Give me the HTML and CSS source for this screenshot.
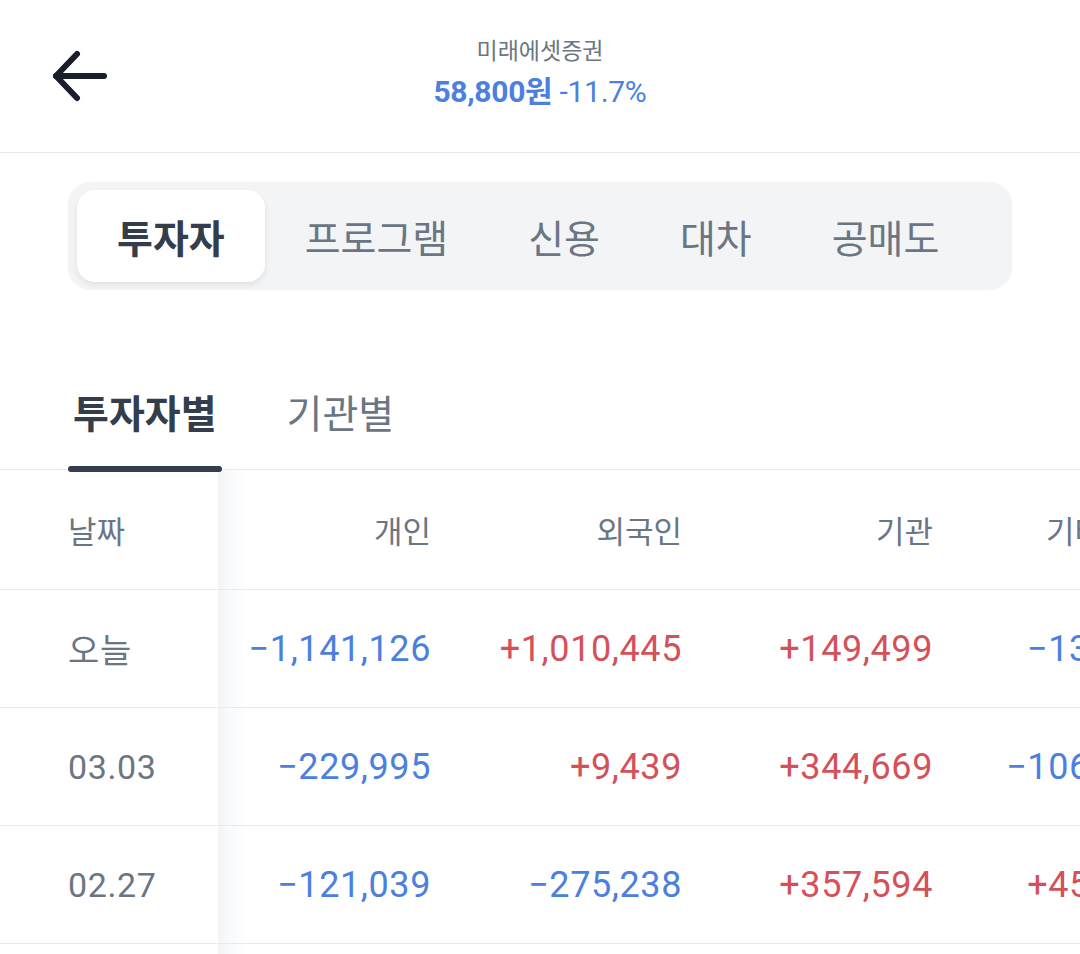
FILE: index.html
```html
<!DOCTYPE html>
<html lang="ko">
<head>
<meta charset="utf-8">
<link rel="stylesheet" href="styles.css">
</head>
<body>
<div class="page">
  <header class="top">
    <div class="back">
      <svg width="60" height="56" viewBox="0 0 60 56" fill="none" stroke="#191f28" stroke-width="6" stroke-linecap="round" stroke-linejoin="round">
        <path d="M5 26 H53"/>
        <path d="M26 4 L5 26 L26 48"/>
      </svg>
    </div>
    <div class="title">
      <div class="name">미래에셋증권</div>
      <div class="price"><span class="won">58,800원</span> <span class="rate">-11.7%</span></div>
    </div>
    <div class="spacer"></div>
  </header>

  <nav class="segment">
    <div class="seg-item active">투자자</div>
    <div class="seg-item">프로그램</div>
    <div class="seg-item">신용</div>
    <div class="seg-item">대차</div>
    <div class="seg-item">공매도</div>
  </nav>

  <div class="subtabs">
    <div class="subtab active"><span class="label">투자자별</span><span class="bar"></span></div>
    <div class="subtab"><span class="label">기관별</span><span class="bar"></span></div>
  </div>

  <div class="table">
    <div class="row head">
      <div class="cell date">날짜</div>
      <div class="cell num first">개인</div>
      <div class="cell num">외국인</div>
      <div class="cell num">기관</div>
      <div class="cell num">기타법인</div>
    </div>
    <div class="row">
      <div class="cell date">오늘</div>
      <div class="cell num first minus">−1,141,126</div>
      <div class="cell num plus">+1,010,445</div>
      <div class="cell num plus">+149,499</div>
      <div class="cell num minus">−13,918</div>
    </div>
    <div class="row">
      <div class="cell date">03.03</div>
      <div class="cell num first minus">−229,995</div>
      <div class="cell num plus">+9,439</div>
      <div class="cell num plus">+344,669</div>
      <div class="cell num minus">−106,113</div>
    </div>
    <div class="row">
      <div class="cell date">02.27</div>
      <div class="cell num first minus">−121,039</div>
      <div class="cell num minus">−275,238</div>
      <div class="cell num plus">+357,594</div>
      <div class="cell num plus">+45,683</div>
    </div>
    <div class="row">
      <div class="cell date">02.26</div>
      <div class="cell num first minus"></div>
      <div class="cell num"></div>
      <div class="cell num"></div>
      <div class="cell num"></div>
    </div>
  </div>
</div>
</body>
</html>
```

FILE: styles.css
```css
* { box-sizing: border-box; }
html, body { margin: 0; padding: 0; background: #fff; }
body {
  font-family: "Noto Sans CJK KR", "Noto Sans", sans-serif;
  color: #333d4b;
}
.page {
  width: 1080px;
  height: 954px;
  overflow: hidden;
}

/* header */
.top {
  height: 153px;
  border-bottom: 1px solid #e8eaed;
  display: grid;
  grid-template-columns: 1fr auto 1fr;
  align-items: start;
}
.back {
  padding: 50px 0 0 51px;
}
.back svg { display: block; }
.title {
  text-align: center;
  padding-top: 33px;
}
.name {
  font-size: 23px;
  line-height: 32px;
  color: #6b7684;
}
.price {
  margin-top: 8px;
  font-family: Roboto, "Noto Sans CJK KR", sans-serif;
  font-size: 30px;
  line-height: 38px;
  color: #4b80df;
  letter-spacing: -0.3px;
}
.price .won { font-weight: 700; }
.price .rate { font-weight: 400; }

/* segmented control */
.segment {
  margin: 29px 68px 0 68px;
  height: 108px;
  background: #f2f4f6;
  border-radius: 22px;
  padding: 8px 9px;
  display: flex;
  align-items: stretch;
}
.seg-item {
  padding: 0 40px;
  display: flex;
  align-items: center;
  font-size: 39px;
  color: #6b7684;
  border-radius: 18px;
}
.seg-item.active {
  background: #fff;
  color: #333d4b;
  font-weight: 600;
  box-shadow: 0 3px 6px rgba(0, 0, 0, 0.08);
}

/* sub tabs */
.subtabs {
  margin-top: 81px;
  height: 99px;
  border-bottom: 1px solid #e8eaed;
  display: flex;
  padding-left: 68px;
  gap: 60px;
}
.subtab {
  display: flex;
  flex-direction: column;
  align-items: stretch;
  height: 101px;
  position: relative;
  z-index: 1;
}
.subtab .label {
  padding: 14px 5px 0 5px;
  height: 95px;
  font-size: 39px;
  line-height: 52px;
  color: #6b7684;
}
.subtab.active .label {
  color: #333d4b;
  font-weight: 700;
}
.subtab .bar {
  height: 6px;
  border-radius: 3px;
}
.subtab.active .bar { background: #333d4b; }

/* table */
.table {
  width: 1080px;
  overflow: hidden;
}
.row {
  display: grid;
  grid-template-columns: 218px 213px 251px 251px 227px;
  height: 118px;
  border-bottom: 1px solid #e8eaed;
  width: 1160px;
}
.row.head { height: 120px; }
.cell {
  display: flex;
  align-items: center;
  white-space: nowrap;
}
.cell.date {
  padding-left: 68px;
  font-size: 34px;
  color: #6b7684;
  font-family: Roboto, "Noto Sans CJK KR", sans-serif;
  letter-spacing: 0.6px;
}
.row.head .cell.date,
.row.head .cell.num {
  font-family: "Noto Sans CJK KR", sans-serif;
  font-size: 31px;
  color: #6b7684;
  letter-spacing: 0;
}
.cell.num {
  justify-content: flex-end;
  font-family: Roboto, "Noto Sans CJK KR", sans-serif;
  font-size: 36px;
  letter-spacing: 0.6px;
}
.cell.first {
  background: linear-gradient(to right, #f2f4f6 0px, #fafbfc 14px, #ffffff 30px);
}
.minus { color: #4b80df; }
.plus { color: #d4515a; }
```
